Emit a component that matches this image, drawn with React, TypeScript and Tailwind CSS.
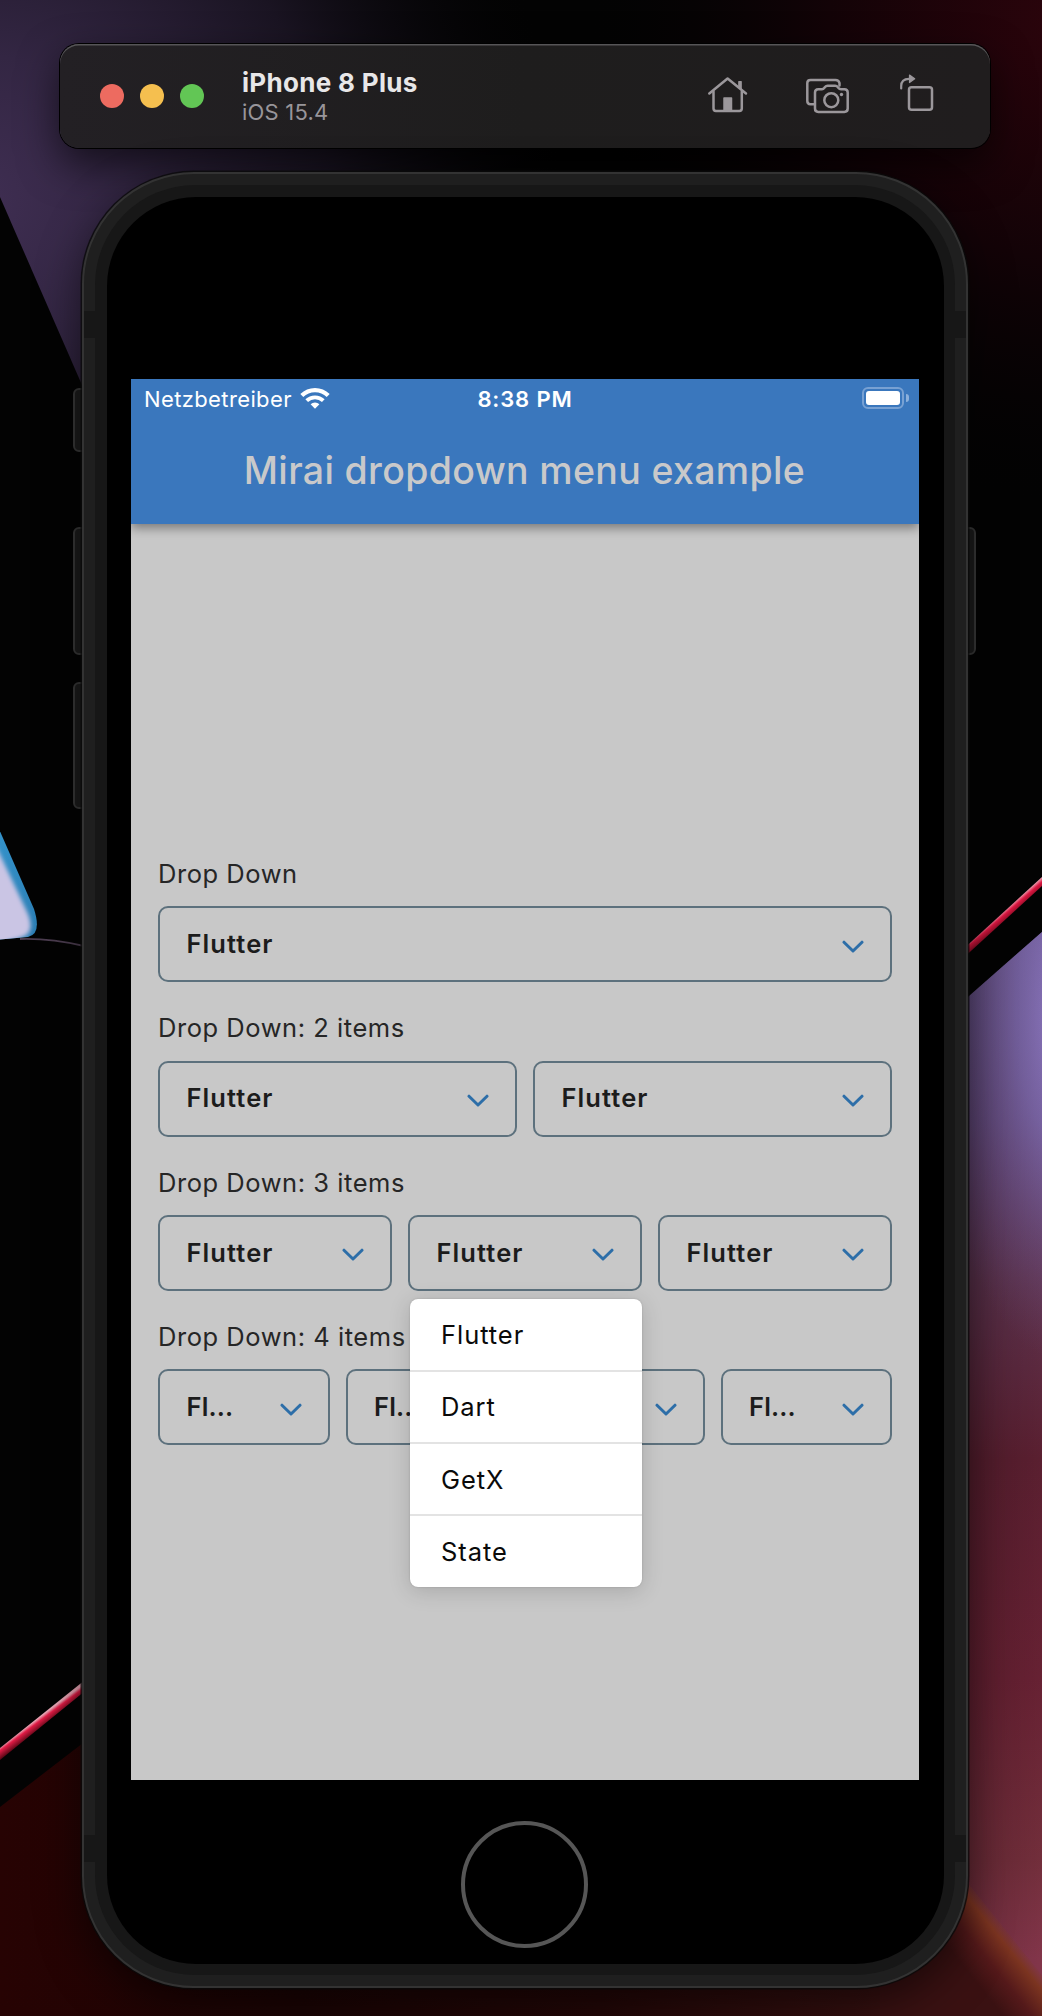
import React from "react";

function Wallpaper() {
  return (
    <svg className="absolute inset-0 h-[2016px] w-[1042px]" viewBox="0 0 1042 2016" aria-hidden="true">
      <defs>
        <radialGradient id="violetGlow" gradientUnits="userSpaceOnUse" cx="-20" cy="200" r="580">
          <stop offset="0" stopColor="#3f2e52" />
          <stop offset="0.25" stopColor="#332643" />
          <stop offset="0.6" stopColor="#1a1422" />
          <stop offset="1" stopColor="#060507" stopOpacity="0" />
        </radialGradient>
        <radialGradient id="redGlow" gradientUnits="userSpaceOnUse" cx="1070" cy="20" r="480">
          <stop offset="0" stopColor="#2c040c" />
          <stop offset="0.5" stopColor="#130307" />
          <stop offset="1" stopColor="#040304" stopOpacity="0" />
        </radialGradient>
        <linearGradient id="sailEdge" gradientUnits="userSpaceOnUse" x1="0" y1="840" x2="20" y2="940">
          <stop offset="0" stopColor="#3391c9" />
          <stop offset="1" stopColor="#2b7db3" />
        </linearGradient>
        <linearGradient id="rose" gradientUnits="userSpaceOnUse" x1="968" y1="960" x2="1010" y2="1960">
          <stop offset="0" stopColor="#65528a" />
          <stop offset="0.16" stopColor="#604678" />
          <stop offset="0.32" stopColor="#5e334e" />
          <stop offset="0.5" stopColor="#5a1f30" />
          <stop offset="0.72" stopColor="#672133" />
          <stop offset="0.9" stopColor="#722e3b" />
          <stop offset="1" stopColor="#82354a" />
        </linearGradient>
        <radialGradient id="lilac" gradientUnits="userSpaceOnUse" cx="0" cy="0" r="1" gradientTransform="translate(1062 1020) scale(130 340)">
          <stop offset="0" stopColor="#8a76bd" />
          <stop offset="0.35" stopColor="#7d69ab" stopOpacity="0.75" />
          <stop offset="1" stopColor="#6a4a7a" stopOpacity="0" />
        </radialGradient>
        <linearGradient id="plum" gradientUnits="userSpaceOnUse" x1="968" y1="0" x2="1042" y2="0">
          <stop offset="0" stopColor="#000000" stopOpacity="0.15" />
          <stop offset="1" stopColor="#000000" stopOpacity="0" />
        </linearGradient>
        <linearGradient id="ember" gradientUnits="userSpaceOnUse" x1="1005" y1="1926" x2="960" y2="1962">
          <stop offset="0" stopColor="#7c3a24" stopOpacity="0" />
          <stop offset="0.2" stopColor="#7b3420" />
          <stop offset="0.6" stopColor="#54191a" />
          <stop offset="1" stopColor="#3a1112" />
        </linearGradient>
        <linearGradient id="maroon" gradientUnits="userSpaceOnUse" x1="0" y1="0" x2="1000" y2="0">
          <stop offset="0" stopColor="#270303" />
          <stop offset="0.3" stopColor="#1c0404" />
          <stop offset="0.6" stopColor="#240707" />
          <stop offset="1" stopColor="#3f1414" />
        </linearGradient>
        <linearGradient id="neonLeft" gradientUnits="userSpaceOnUse" x1="40" y1="1717" x2="46" y2="1725">
          <stop offset="0" stopColor="#e9a5b4" />
          <stop offset="0.3" stopColor="#e01b45" />
          <stop offset="1" stopColor="#5c0716" />
        </linearGradient>
        <linearGradient id="neonRight" gradientUnits="userSpaceOnUse" x1="1003" y1="911" x2="1010" y2="919">
          <stop offset="0" stopColor="#efaab9" />
          <stop offset="0.35" stopColor="#dc1641" />
          <stop offset="1" stopColor="#6e0a1c" />
        </linearGradient>
        <clipPath id="sailClip">
          <path d="M-1 829L34 909Q42 934 28 937L0 939.500H-1Z" />
        </clipPath>
        <filter id="soften" x="-50%" y="-20%" width="200%" height="140%">
          <feGaussianBlur stdDeviation="2.200" />
        </filter>
      </defs>
      <rect width="1042" height="2016" fill="#030303" />
      <path d="M0 0H700V440H106L0 197Z" fill="url(#violetGlow)" />
      <rect x="500" width="542" height="520" fill="url(#redGlow)" />
      <g clipPath="url(#sailClip)">
        <rect y="820" width="44" height="124" fill="url(#sailEdge)" />
        <path d="M-30 800L-6 842L28 914Q36 934 20 938L0 944L-30 948Z" fill="#cac5e4" filter="url(#soften)" />
      </g>
      <path d="M20 939Q50 938 84 946" fill="none" stroke="#4c3d50" strokeWidth="1.800" />
      <path d="M960 952L1042 877V886L960 961Z" fill="url(#neonRight)" />
      <path d="M960 1004L1042 932V2016H960Z" fill="url(#rose)" />
      <path d="M960 1004L1042 932V2016H960Z" fill="url(#lilac)" />
      <path d="M960 1004L1042 932V2016H960Z" fill="url(#plum)" />
      <path d="M0 1748L90 1676V1687L0 1760Z" fill="url(#neonLeft)" />
      <path d="M0 1807L240 1622V2016H0Z" fill="url(#maroon)" />
      <path d="M200 1950H960V2016H200Z" fill="url(#maroon)" />
      <path d="M880 1950L960 1873L1042 1975V2016H880Z" fill="url(#ember)" />
    </svg>
  );
}

function HomeIcon() {
  return (
    <svg className="h-[40px] w-[42px]" viewBox="706 74 42 40" fill="none" stroke="#9b979b" strokeWidth="2.5" strokeLinecap="round" strokeLinejoin="round">
      <path d="M709.300 92.500L727.600 77.500L746 92.500" />
      <path d="M713.500 90.500V107.500Q713.500 109.900 715.900 109.900H739.400Q741.800 109.900 741.800 107.500V90.500" />
      <path d="M738.800 80.500H741.200V88L738.800 86Z" fill="#9b979b" strokeWidth="1.200" />
      <path d="M724 97H731.500V109H724Z" fill="#9b979b" strokeWidth="1.500" />
    </svg>
  );
}

function CameraIcon() {
  return (
    <svg className="h-[40px] w-[46px]" viewBox="804 74 46 40" fill="none" stroke="#9b979b" strokeWidth="2.5" strokeLinecap="round" strokeLinejoin="round">
      <path d="M813.500 103.200H810.500Q807.300 103.200 807.300 100V82Q807.300 78.900 810.500 78.900H835.500Q838.700 78.900 839.500 82V84.500" />
      <path d="M818.300 88.200H822Q823.300 88.200 824.200 87L825 86Q826 84.800 827.600 84.800H835.200Q836.800 84.800 837.700 86L838.500 87Q839.400 88.200 841 88.200H844.300Q847.700 88.200 847.700 91.500V107.500Q847.700 110.900 844.300 110.900H818.300Q815 110.900 815 107.500V91.500Q815 88.200 818.300 88.200Z" />
      <circle cx="831.300" cy="99.200" r="7" />
      <circle cx="841.500" cy="93.500" r="1.700" fill="#9b979b" stroke="none" />
    </svg>
  );
}

function RotateIcon() {
  return (
    <svg className="h-[44px] w-[36px]" viewBox="898 72 36 44" fill="none" stroke="#9b979b" strokeWidth="2.5" strokeLinecap="round" strokeLinejoin="round">
      <rect x="909" y="86.200" width="23" height="22.600" rx="2.500" />
      <path d="M901.200 87.500V85Q901.200 78 909 77.800" strokeWidth="2.200" />
      <path d="M909.500 74L914.700 77.800L909.500 81.500Z" fill="#9b979b" strokeWidth="1.200" />
    </svg>
  );
}

function SimulatorToolbar() {
  return (
    <header className="relative flex h-[104px] w-[930px] items-center rounded-[19px] bg-linear-to-r from-[#232024] via-[#1e1d1d] to-[#201d1e] pr-14 pl-10 shadow-[0_0_0_1px_#000,inset_0_1.5px_0_#565557,0_16px_40px_rgba(0,0,0,0.6)]">
      <div className="flex gap-4">
        <span className="size-6 rounded-full bg-[#ed6b60]" />
        <span className="size-6 rounded-full bg-[#f5bf4f]" />
        <span className="size-6 rounded-full bg-[#62c655]" />
      </div>
      <div className="ml-[38px] flex flex-col pt-[3px]">
        <span className="h-[30px] text-[26px] leading-[30px] font-bold tracking-[0.31px] text-[#e8e7e8]">iPhone 8 Plus</span>
        <span className="h-[29px] text-[22px] leading-[29px] tracking-[0.2px] text-[#98959a]">iOS 15.4</span>
      </div>
      <div className="ml-auto flex items-center pb-[3px]">
        <HomeIcon />
        <span className="w-14" />
        <CameraIcon />
        <span className="w-12" />
        <RotateIcon />
      </div>
    </header>
  );
}

function WifiIcon() {
  return (
    <svg className="h-[22px] w-[30px]" viewBox="0 0 30 22" fill="none" stroke="#fff" strokeWidth="4.200">
      <path d="M1.800 8.600A18.800 18.800 0 0 1 28.200 8.600" />
      <path d="M6.700 13.700A11.800 11.800 0 0 1 23.300 13.700" strokeWidth="3.800" />
      <path d="M10.600 17.300A6.200 6.200 0 0 1 19.400 17.300L15 21.800Z" fill="#fff" stroke="none" />
    </svg>
  );
}

function Battery() {
  return (
    <div className="flex items-center gap-[2px]">
      <div className="h-[22px] w-[42px] rounded-[6px] border-2 border-[#78a1d3] p-[2px]">
        <div className="h-full w-full rounded-[3px] bg-white" />
      </div>
      <span className="h-[8px] w-[3px] rounded-r-full bg-[#8cb0dc]" />
    </div>
  );
}

function StatusBar() {
  return (
    <div className="grid h-10 grid-cols-3 items-center pr-[10px] pl-[13px] text-[22px] leading-10 text-white">
      <div className="flex items-center">
        <span className="tracking-[0.38px]">Netzbetreiber</span>
        <span className="ml-[8px] pb-[2px]">
          <WifiIcon />
        </span>
      </div>
      <span className="pr-[3px] text-center font-semibold tracking-[0.85px]">8:38 PM</span>
      <div className="flex justify-end pb-[2px]">
        <Battery />
      </div>
    </div>
  );
}

const OPTIONS = ["Flutter", "Dart", "GetX", "State"];

function OptionsMenu() {
  return (
    <ul className="absolute top-[82px] left-0 z-10 w-[232px] overflow-hidden rounded-[8px] bg-white shadow-[0_0_2px_rgba(0,0,0,0.18),0_4px_22px_rgba(0,0,0,0.16)]">
      {OPTIONS.map((option) => (
        <li
          key={option}
          className="flex h-[72.2px] items-center border-b-2 border-[#e3e3e3] pt-px pl-[31px] text-[25.5px] font-normal tracking-[0.95px] text-[#0a0a0a] first:h-[73px] last:h-[71px] last:border-b-0 last:pb-px"
        >
          {option}
        </li>
      ))}
    </ul>
  );
}

function Dropdown({ compact = false, open = false }: { compact?: boolean; open?: boolean }) {
  return (
    <div className="relative flex h-[76px] min-w-0 flex-1 items-center justify-between rounded-[10px] border-2 border-[#5d717d] pr-[26px] pl-[26.500px] font-semibold text-[#1c1c1c]">
      {compact ? (
        <span className="text-[25.5px] tracking-[0.15px]">Fl...</span>
      ) : (
        <span className="text-[25.5px] tracking-[1.08px]">Flutter</span>
      )}
      <svg className="mt-[5px] h-[14px] w-[22px]" viewBox="0 0 22 14" fill="none" stroke="#2d6ea8" strokeWidth="3" strokeLinecap="round" strokeLinejoin="round">
        <path d="M2 2.200L11 11L20 2.200" />
      </svg>
      {open && <OptionsMenu />}
    </div>
  );
}

function Section({ label, count, openIndex = -1 }: { label: string; count: number; openIndex?: number }) {
  return (
    <section className="flex flex-col gap-[16.300px]">
      <h2 className="h-8 text-[25.500px] leading-8 tracking-[0.54px] text-[#262626]">{label}</h2>
      <div className="flex gap-4">
        {Array.from({ length: count }, (_, i) => (
          <Dropdown key={i} compact={count === 4} open={i === openIndex} />
        ))}
      </div>
    </section>
  );
}

function AppScreen() {
  return (
    <main className="ml-[24.500px] flex h-[1401px] w-[788px] flex-col overflow-hidden bg-[#c8c8c8]">
      <div className="relative z-20 h-[144.500px] bg-[#3a77bd] shadow-[0_4px_10px_rgba(0,0,0,0.4)]">
        <StatusBar />
        <h1 className="h-[103px] pr-px text-center text-[37.500px] leading-[103px] font-medium tracking-[0.34px] whitespace-nowrap text-[#c9c9ca]">
          Mirai dropdown menu example
        </h1>
      </div>
      <div className="flex flex-col gap-[30px] px-[27px] pt-[334.500px]">
        <Section label="Drop Down" count={1} />
        <Section label="Drop Down: 2 items" count={2} />
        <Section label="Drop Down: 3 items" count={3} openIndex={1} />
        <Section label="Drop Down: 4 items" count={4} />
      </div>
    </main>
  );
}

function SideButton({ className }: { className: string }) {
  return <span className={`absolute -z-10 w-[14px] border-2 border-[#373737] bg-[#1b1b1b] ${className}`} />;
}

function AntennaBand({ className }: { className: string }) {
  return <span className={`absolute h-[27px] w-[11px] bg-[#171717] ${className}`} />;
}

function Phone() {
  return (
    <div className="relative isolate mt-6 ml-[22px] w-[886px]">
      <SideButton className="top-[216px] -left-[9px] h-[64px] rounded-l-[6px]" />
      <SideButton className="top-[355px] -left-[9px] h-[128px] rounded-l-[6px]" />
      <SideButton className="top-[510px] -left-[9px] h-[127px] rounded-l-[6px]" />
      <SideButton className="top-[355px] -right-[8px] h-[128px] rounded-r-[6px]" />
      <div className="relative h-[1816px] rounded-[112px] border-2 border-[#333333] bg-[#1f1f1f] p-[11px] shadow-[0_0_0_1.5px_rgba(10,10,10,0.8),0_16px_44px_rgba(0,0,0,0.55)]">
        <AntennaBand className="top-[137px] left-0" />
        <AntennaBand className="top-[137px] right-0" />
        <AntennaBand className="bottom-[124px] left-0" />
        <AntennaBand className="right-0 bottom-[124px]" />
        <div className="h-full rounded-[100px] bg-[#171717] p-[11.500px]">
          <div className="flex h-full flex-col rounded-[89px] bg-black pt-[182.500px]">
            <AppScreen />
            <div className="mt-[41px] mr-px size-[127px] self-center rounded-full border-4 border-[#565656]" />
          </div>
        </div>
      </div>
    </div>
  );
}

export default function App() {
  return (
    <div className="relative h-[2016px] w-[1042px] overflow-hidden bg-black font-[Inter,sans-serif]">
      <Wallpaper />
      <div className="relative pt-[44px] pl-[60px]">
        <SimulatorToolbar />
        <Phone />
      </div>
    </div>
  );
}
